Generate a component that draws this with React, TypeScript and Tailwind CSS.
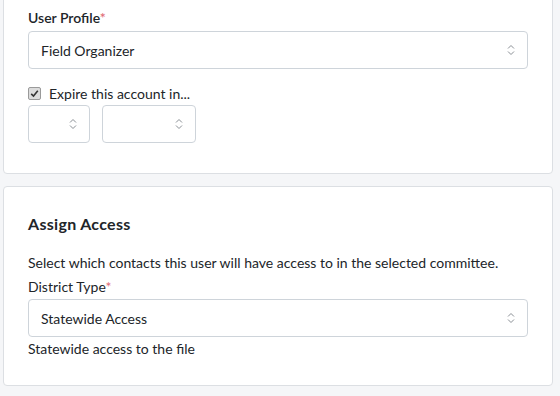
import React from "react";

const Chevrons = () => (
    <svg width="8" height="12" viewBox="0 0 8 12" fill="none" className="text-[#8a8f95]">
        <path d="M1 4.5 L4 1.5 L7 4.5" stroke="currentColor" strokeWidth="1" />
        <path d="M1 7.5 L4 10.5 L7 7.5" stroke="currentColor" strokeWidth="1" />
    </svg>
);

const Select = ({ value, className = "" }: { value?: string; className?: string }) => (
    <div
        className={`flex h-[38px] items-center justify-between rounded-[4px] border border-[#ced4da] bg-white pl-[12px] pr-[12px] ${className}`}
    >
        <span className="text-[14px] text-[#212529]">{value}</span>
        <Chevrons />
    </div>
);

const Required = () => <span className="text-[#e06c75]">*</span>;

export default function App() {
    return (
        <div
            className="h-[396px] overflow-hidden bg-[#f5f6f8] pl-[3px] pr-[7px] text-[14px] text-[#212529]"
            style={{ fontFamily: 'Lato, "Noto Sans", sans-serif' }}
        >
            <div className="-mt-[10px] rounded-[4px] border border-[#dcdfe3] bg-white px-[24px] pb-[30px] pt-[17px]">
                <div className="font-semibold leading-[20px]">
                    User Profile<Required />
                </div>
                <Select value="Field Organizer" className="mt-[3px]" />
                <label className="mt-[14px] flex h-[20px] items-center gap-[8px]">
                    <span className="flex h-[13px] w-[13px] items-center justify-center rounded-[2px] border border-[#9a9a9a] bg-[#dcdcdc]">
                        <svg width="9" height="9" viewBox="0 0 9 9" fill="none">
                            <path d="M1.2 4.8 L3.5 7 L7.8 1.8" stroke="#333" strokeWidth="1.6" />
                        </svg>
                    </span>
                    Expire this account in...
                </label>
                <div className="mt-[2px] flex gap-[12px]">
                    <Select className="w-[62px]" />
                    <Select className="w-[94px]" />
                </div>
            </div>

            <div className="mt-[12px] rounded-[4px] border border-[#dcdfe3] bg-white px-[24px] pb-[26px] pt-[26px]">
                <h2 className="text-[16px] font-bold leading-[22px] tracking-[0.3px]">Assign Access</h2>
                <p className="mt-[18px] leading-[20px]">
                    Select which contacts this user will have access to in the selected committee.
                </p>
                <div className="mt-[4px] leading-[20px]">
                    District Type<Required />
                </div>
                <Select value="Statewide Access" className="mt-[2px]" />
                <p className="mt-[2px] leading-[20px]">Statewide access to the file</p>
            </div>
        </div>
    );
}
